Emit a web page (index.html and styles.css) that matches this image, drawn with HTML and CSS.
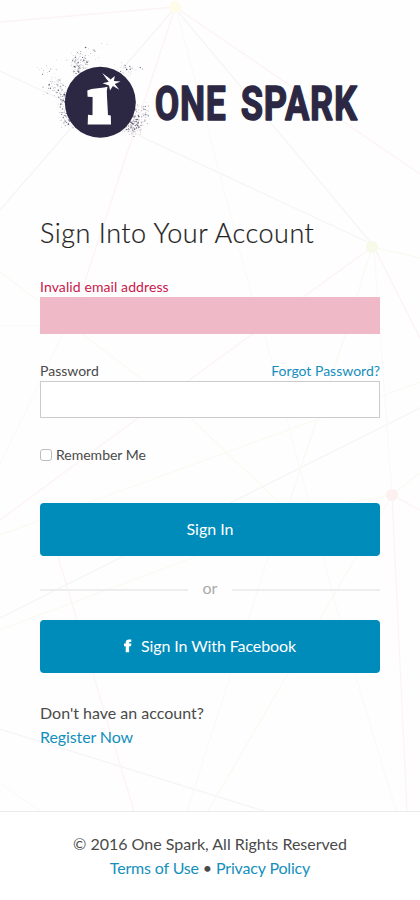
FILE: index.html
```html
<!DOCTYPE html>
<html lang="en">
<head>
<meta charset="utf-8">
<meta name="viewport" content="width=device-width, initial-scale=1">
<title>One Spark - Sign In</title>
<link rel="stylesheet" href="styles.css">
</head>
<body>
<svg class="mesh" width="420" height="811" viewBox="0 0 420 811" aria-hidden="true">
  <g class="gray">
    <path d="M0 210L175 8L372 244L0 71M0 618L420 408M0 729L264 811"/>
  </g>
  <g class="faint">
    <path d="M177 12L255 308M265 336L345 640L396 811M374 250L380 330L392 495M0 464L70 320M0 326H120M280 520L187 811M0 783L40 811"/>
  </g>
  <g class="pink">
    <path d="M0 22L175 7L420 174M175 8L78 302M372 247L188 381L0 520M374 247L420 338M392 495L407 811M392 495L420 510M56 550L134 811"/>
  </g>
  <g class="cream">
    <path d="M0 272L180 408L285 508M372 247L345 335L290 500M372 247L420 258M0 535L90 502L420 382M392 495L420 473M392 495L350 502M0 630L240 540M392 495L208 811"/>
  </g>
  <circle cx="175" cy="7" r="6" fill="#fffbe9"/>
  <circle cx="372" cy="247" r="6" fill="#f7f9e9"/>
  <circle cx="392" cy="495" r="6" fill="#fdf0f1"/>
</svg>
<main class="page">
  <svg class="logo" width="340" height="110" viewBox="30 40 340 110" role="img" aria-label="One Spark">
    <g id="spray" fill="#2c2843"></g>
    <circle cx="100.3" cy="102.3" r="35.5" fill="#2c2843"/>
    <path d="M87.3 90.5L91.5 89L104 87.6L107.5 86.8L106.8 91L107 97L108 115L110.8 115.5L111 124.6L87.7 124.4L88 114.8L92.5 115.2L92.6 97L87.6 96.8Z" fill="#fff"/>
    <path d="M102.2 73L109 78.1L110.5 79.5L114.8 76L113.9 81L120.6 81.5L114.8 84L119.3 89.8L112.9 86L110 90.4L109 85.5L102.5 83.2L108.8 81.8L106.5 79Z" fill="#fff"/>
    <text class="wordmark" transform="translate(154.8 119.6) scale(.726 1)">ONE</text>
    <text class="wordmark" transform="translate(240.7 119.6) scale(.739 1)">SPARK</text>
  </svg>
  <h1>Sign Into Your Account</h1>
  <form>
    <div class="row error"><label for="email">Invalid email address</label></div>
    <input class="field invalid" id="email" type="text">
    <div class="row second"><label for="password">Password</label><a class="forgot" href="#">Forgot Password?</a></div>
    <input class="field" id="password" type="password">
    <label class="remember"><input type="checkbox"><span>Remember Me</span></label>
    <button class="btn" type="button"><span class="t-signin">Sign In</span></button>
    <div class="divider"><span>or</span></div>
    <button class="btn" type="button">
      <svg width="8" height="14" viewBox="0 0 8 14"><path d="M1.7 13.2V7.2H0V4.4h1.7V3.4C1.7 1.3 3 .4 5 .4c1 0 1.8.1 2.3.2v2.5H6.1c-.8 0-1 .3-1 .8v.5h2.3L7 7.2H5.1v6z" fill="#fff"/></svg>
      <span class="t-fb">Sign In With Facebook</span>
    </button>
  </form>
  <p class="register"><span class="t-dont">Don't have an account?</span><br><a class="t-reg" href="#">Register Now</a></p>
</main>
<footer>
  <span class="t-copy">© 2016 One Spark, All Rights Reserved</span><br>
  <span class="t-links"><a href="#">Terms of Use</a> • <a href="#">Privacy Policy</a></span>
</footer>
<script src="script.js"></script>
</body>
</html>
```
FILE: styles.css
```css
* { box-sizing: border-box; }
body {
  margin: 0;
  min-height: 900px;
  position: relative;
  display: flex;
  flex-direction: column;
  background: #fefefe;
  color: #4a4a4a;
  font: 16px/24px Lato, "Open Sans", sans-serif;
}
a { color: #148fbd; text-decoration: none; }
.mesh { position: absolute; top: 0; left: 0; z-index: -1; fill: none; stroke-width: 1.3; }
.gray { stroke: #f5f5f6; }
.faint { stroke: #fafafa; }
.pink { stroke: #fdf3f4; }
.cream { stroke: #fafaf3; }
.page { height: 811px; padding: 40px 40px 0; }
.logo { display: block; margin-left: -10px; }
.wordmark {
  font: 700 49px Roboto, sans-serif;
  letter-spacing: 1px;
  fill: #2c2843;
  stroke: #2c2843;
  stroke-width: 1.5;
  stroke-linejoin: round;
}
h1 {
  margin: 66px 0 0;
  font-size: 27px;
  line-height: 34px;
  font-weight: 300;
  letter-spacing: .52px;
  color: #222;
  -webkit-text-stroke: .2px #222;
  white-space: nowrap;
}
form { padding-top: 27px; }
.row {
  display: flex;
  justify-content: space-between;
  height: 20px;
  line-height: 19px;
  font-size: 14px;
}
.error { color: #cb174b; letter-spacing: .1px; }
.second { margin-top: 27px; }
.field {
  display: block;
  width: 100%;
  height: 37px;
  border: 1px solid #ccc;
  border-radius: 0;
  background: #fff;
  outline: 0;
}
.invalid { background: #efb9c8; border-color: #efb9c8; }
.remember {
  display: flex;
  align-items: center;
  gap: 4px;
  margin-top: 27px;
  height: 20px;
  font-size: 14px;
}
.remember input {
  appearance: none;
  width: 12px;
  height: 12px;
  margin: 0;
  border: 1px solid #bcbcbc;
  border-radius: 3px;
  background: #fff;
}
.btn {
  display: flex;
  align-items: center;
  justify-content: center;
  gap: 9px;
  width: 100%;
  height: 53px;
  padding: 0 0 2px;
  border: 0;
  border-radius: 4px;
  background: #008cba;
  color: #fff;
  font: 16px/24px Lato, "Open Sans", sans-serif;
}
.t-fb { letter-spacing: -.1px; }
.remember + .btn { margin-top: 38px; }
.divider {
  display: flex;
  align-items: center;
  gap: 15px;
  height: 64px;
  padding-top: 4px;
  color: #aaa;
}
.divider span { margin-top: -4px; }
.divider::before, .divider::after { content: ""; flex: 1; height: 2px; background: #eee; }
.register { margin: 28px 0 0; }
.t-reg { letter-spacing: -.1px; }
.t-links { letter-spacing: -.16px; }
footer {
  height: 89px;
  padding-top: 20px;
  border-top: 1px solid #eaeaea;
  background: #fff;
  text-align: center;
}
```
FILE: script.js
```js
// Sprays ink specks around the badge: [x, y, spread x, spread y, count]
const clusters = [
  [80, 61, 7, 6, 85], [92, 57, 11, 7, 35], [55, 87, 7, 6, 70], [47, 68, 7, 5, 22],
  [64, 102, 4, 9, 110], [68, 119, 6, 6, 90], [132, 127, 7, 5, 150],
  [143, 113, 6, 6, 60], [127, 69, 8, 4, 45], [133, 118, 4, 9, 110], [79, 69, 6, 5, 70]
];
let seed = 41;
const rand = () => (seed = (seed * 16807) % 2147483647) / 2147483647;
const spread = () => (rand() + rand() + rand() - 1.5) * 1.5;
const spray = document.getElementById("spray");
for (const [x, y, dx, dy, count] of clusters) {
  for (let i = 0; i < count; i++) {
    const dot = document.createElementNS("http://www.w3.org/2000/svg", "circle");
    dot.setAttribute("cx", x + spread() * dx);
    dot.setAttribute("cy", y + spread() * dy);
    dot.setAttribute("r", 0.15 + rand() * rand() * 0.75);
    dot.setAttribute("opacity", 0.35 + rand() * 0.5);
    spray.append(dot);
  }
}
```
